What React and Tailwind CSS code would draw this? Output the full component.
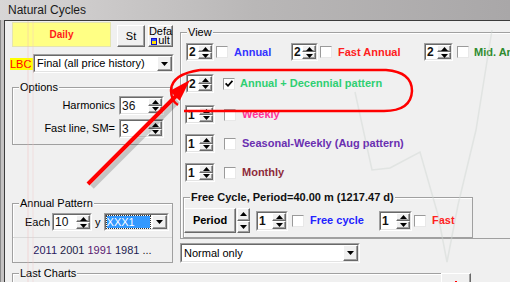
import React from "react";

const F = "font-['Liberation_Sans',Arial,sans-serif]";

function Tri({ down }) {
  return (
    <svg width="7" height="4" viewBox="0 0 7 4">
      <path d={down ? "M0 0H7L3.5 4Z" : "M3.5 0L7 4H0Z"} fill="#000" />
    </svg>
  );
}

const raised =
  "bg-[#f0f0f0] border border-t-white border-l-white border-b-[#696969] border-r-[#696969] shadow-[inset_-1px_-1px_0_#a0a0a0]";

function SpinBtns({ className = "" }) {
  return (
    <div className={`flex flex-col shrink-0 ${className}`}>
      <div className={`flex-1 flex items-center justify-center ${raised}`}>
        <Tri />
      </div>
      <div className={`flex-1 flex items-center justify-center ${raised}`}>
        <Tri down />
      </div>
    </div>
  );
}

function Spin({ v, className = "" }) {
  return (
    <div
      className={`flex shrink-0 border border-t-[#a0a0a0] border-l-[#a0a0a0] border-b-white border-r-white ${className}`}
    >
      <div className="flex flex-1 border border-t-[#696969] border-l-[#696969] border-b-[#e3e3e3] border-r-[#e3e3e3] bg-white">
        <span className="flex-1 pl-[1px] text-[12px] leading-none flex items-center text-[#111]">
          {v}
        </span>
        <SpinBtns className="w-[14px]" />
      </div>
    </div>
  );
}

function Check({ checked, className = "" }) {
  return (
    <div
      className={`w-[12px] h-[12px] shrink-0 border border-t-[#9a9a9a] border-l-[#9a9a9a] border-b-[#e8e8e8] border-r-[#e8e8e8] bg-white flex items-center justify-center ${className}`}
    >
      {checked && (
        <svg width="8" height="7" viewBox="0 0 8 7">
          <path d="M0.6 3.4L3 5.8L7.4 0.8" stroke="#000" strokeWidth="1.7" fill="none" />
        </svg>
      )}
    </div>
  );
}

function Combo({ className = "", children }) {
  return (
    <div
      className={`flex shrink-0 border border-t-[#a0a0a0] border-l-[#a0a0a0] border-b-white border-r-white ${className}`}
    >
      <div className="flex flex-1 border border-t-[#696969] border-l-[#696969] border-b-[#e3e3e3] border-r-[#e3e3e3] bg-white">
        <div className="flex-1 flex items-center overflow-hidden">{children}</div>
        <div className={`w-[15px] flex items-center justify-center ${raised}`}>
          <Tri down />
        </div>
      </div>
    </div>
  );
}

function Group({ label, className = "", labelCls = "", children }) {
  return (
    <div className={`relative shrink-0 border border-[#a0a0a0] shadow-[inset_1px_1px_0_#fff] ${className}`}>
      <span
        className={`absolute -top-[7px] left-[6px] bg-[#f0f0f0] px-[1px] text-[11px] leading-[13px] whitespace-nowrap ${labelCls}`}
      >
        {label}
      </span>
      {children}
    </div>
  );
}

export default function App() {
  return (
    <div className={`relative w-[510px] h-[282px] overflow-hidden bg-[#f0f0f0] text-[11px] text-black ${F}`}>
      {/* title bar */}
      <div className="h-[20px] bg-gradient-to-r from-[#d8d6d6] via-[#b9b7b7] to-[#a9a7a8] flex items-center pl-[8px] pb-[1px] text-[12px] text-[#1a1a1a]">
        Natural Cycles
      </div>
      <div className="flex h-[262px]">
        <div className="w-[4px] shrink-0 bg-[#c4c2c2] border-l border-[#8a8a8a]" />
        <div className="flex-1 border-t border-l border-[#3c3c3c] flex flex-col">
          {/* top section */}
          <div className="flex h-[252px] shrink-0">
            {/* left column */}
            <div className="w-[171px] shrink-0 pl-[7px] flex flex-col">
              <div className="flex mt-[1px]">
                <div className="w-[99px] h-[25px] bg-[#ffff84] border border-[#e4e4b0] flex items-center justify-center text-[10px] font-bold text-[#ff1a1a]">
                  Daily
                </div>
                <div className={`ml-[6px] mt-[3px] w-[28px] h-[22px] flex items-center justify-center text-[11px] ${raised}`}>
                  St
                </div>
                <div className={`ml-[3px] mt-[3px] w-[25px] h-[22px] flex flex-col items-center justify-center text-[11px] leading-[9px] ${raised}`}>
                  <span>Defa</span>
                  <span className="flex items-end">
                    <span className="w-[6px] h-[7px] border border-[#1010c0] bg-[#ffe000] mr-[1px] shadow-[inset_0_2px_0_#3050ff]" />
                    ult
                  </span>
                </div>
              </div>
              <div className="flex items-center mt-[7px] -ml-[2px]">
                <span className="bg-[#ffff00] text-[#ff0000] text-[11px] leading-[12px] w-[23px] h-[12px]">LBC</span>
                <Combo className="w-[141px] h-[19px]">
                  <span className="pl-[2px] text-[11px] whitespace-nowrap">Final (all price history)</span>
                </Combo>
              </div>
              <Group label="Options" className="mt-[14px] w-[161px] h-[58px]">
                <div className="flex flex-col items-end pr-[8px]">
                  <div className="flex items-center mt-[8px]">
                    <span className="mr-[4px]">Harmonics</span>
                    <Spin v="36" className="w-[45px] h-[19px]" />
                  </div>
                  <div className="flex items-center mt-[4px]">
                    <span className="mr-[4px]">Fast line, SM=</span>
                    <Spin v="3" className="w-[45px] h-[19px]" />
                  </div>
                </div>
              </Group>
              <Group label="Annual Pattern" className="mt-[58px] w-[161px] h-[60px] flex flex-col">
                <div className="flex items-center mt-[9px] pl-[12px]">
                  <span>Each</span>
                  <Spin v="10" className="ml-[2px] w-[40px] h-[18px]" />
                  <span className="ml-[3px]">y</span>
                  <Combo className="ml-[3px] w-[65px] h-[18px]">
                    <span className="ml-[1px] h-[12px] w-[43px] bg-[#3399ff] text-white text-[11px] leading-[12px] outline-1 outline-dotted outline-[#333]">
                      XXX1
                    </span>
                  </Combo>
                </div>
                <div className="mt-[6px] flex-1 border-t border-[#dadada] flex items-center justify-center text-[11px] whitespace-nowrap">
                  <span className="text-[#2a1860]">2011</span>
                  <span className="ml-[3px] text-[#1c1c44]">2001</span>
                  <span className="ml-[3px] text-[#5a1a70]">1991</span>
                  <span className="ml-[3px] text-[#1c1c50]">1981</span>
                  <span className="ml-[3px] text-[#222]">...</span>
                </div>
              </Group>
            </div>
            {/* right column */}
            <div className="flex-1 flex flex-col">
              <Group label="View" className="ml-[4px] mt-[11px] w-[340px] h-[207px] flex flex-col">
                <div className="flex items-center mt-[10px] ml-[5px] h-[18px] whitespace-nowrap font-bold">
                  <div className="w-[105px] shrink-0 flex items-center">
                    <Spin v="2" className="w-[28px] h-[18px]" />
                    <Check className="ml-[2px]" />
                    <span className="ml-[6px] text-[#3333ff]">Annual</span>
                  </div>
                  <div className="w-[133px] shrink-0 flex items-center">
                    <Spin v="2" className="w-[27px] h-[18px]" />
                    <Check className="ml-[2px]" />
                    <span className="ml-[6px] text-[#ff2020]">Fast Annual</span>
                  </div>
                  <div className="flex shrink-0 items-center">
                    <Spin v="2" className="w-[29px] h-[18px]" />
                    <Check className="ml-[4px]" />
                    <span className="ml-[5px] text-[#2e8b2e]">Mid. Annual</span>
                  </div>
                </div>
                <div className="flex items-center mt-[13px] ml-[5px] h-[19px] font-bold whitespace-nowrap">
                  <Spin v="2" className="w-[28px] h-[19px]" />
                  <Check checked className="ml-[9px]" />
                  <span className="ml-[5px] text-[#2fcf72]">Annual + Decennial pattern</span>
                </div>
                <div className="flex items-center mt-[12px] ml-[4px] h-[19px] font-bold whitespace-nowrap">
                  <Spin v="1" className="w-[30px] h-[19px]" />
                  <Check className="ml-[9px]" />
                  <span className="ml-[6px] text-[#ff3399]">Weekly</span>
                </div>
                <div className="flex items-center mt-[10px] ml-[4px] h-[19px] font-bold whitespace-nowrap">
                  <Spin v="1" className="w-[30px] h-[19px]" />
                  <Check className="ml-[9px]" />
                  <span className="ml-[6px] text-[#6a2fb0]">Seasonal-Weekly (Aug pattern)</span>
                </div>
                <div className="flex items-center mt-[10px] ml-[4px] h-[19px] font-bold whitespace-nowrap">
                  <Spin v="1" className="w-[30px] h-[19px]" />
                  <Check className="ml-[9px]" />
                  <span className="ml-[6px] text-[#8e2b3a]">Monthly</span>
                </div>
                <Group
                  label="Free Cycle, Period=40.00 m (1217.47 d)"
                  labelCls="font-bold text-[#111]"
                  className="ml-[2px] mt-[15px] w-[290px] h-[41px]"
                >
                  <div className="flex items-center mt-[10px] whitespace-nowrap font-bold">
                    <div className="w-[195px] shrink-0 flex items-center">
                      <div className={`w-[52px] h-[25px] shrink-0 flex items-center justify-center ${raised}`}>Period</div>
                      <SpinBtns className="w-[13px] h-[25px] ml-[1px]" />
                      <Spin v="1" className="ml-[6px] w-[32px] h-[20px]" />
                      <Check className="ml-[4px]" />
                      <span className="ml-[6px] text-[#2222ff]">Free cycle</span>
                    </div>
                    <Spin v="1" className="w-[33px] h-[20px]" />
                    <Check className="ml-[2px]" />
                    <span className="ml-[6px] text-[#ff2020]">Fast</span>
                  </div>
                </Group>
              </Group>
              <Combo className="ml-[4px] mt-[4px] w-[180px] h-[20px]">
                <span className="pl-[2px] text-[11px] whitespace-nowrap">Normal only</span>
              </Combo>
            </div>
          </div>
          {/* last charts */}
          <Group label="Last Charts" className="ml-[7px] w-[459px] h-[20px]">
            <div className={`absolute -right-[1px] -top-[1px] w-[30px] h-[14px] flex items-end justify-center ${raised}`}>
              <span className="w-[2px] h-[3px] bg-[#ff0000] mb-[2px]" />
            </div>
          </Group>
        </div>
      </div>

      {/* annotation overlay */}
      <svg className="absolute left-0 top-0 pointer-events-none" width="510" height="282" viewBox="0 0 510 282">
        <g opacity="0.45" fill="none">
          <path d="M28 21V282" stroke="#f2b8b8" strokeWidth="1" />
          <path d="M33 21V282" stroke="#f4caca" strokeWidth="1" />
          <path d="M355 92 L372 170 L390 168 L420 152 L438 215 L447 262 L458 205 L476 130 L492 30" stroke="#cfd6d2" strokeWidth="1.5" />
        </g>
        <path d="M92 187 L178 101" stroke="#000" strokeOpacity="0.18" strokeWidth="5" />
        <path
          d="M200 70 L386 70 Q412 72 412 91 Q411 111 384 111 L184 111"
          stroke="#ff0000"
          strokeWidth="2.5"
          fill="none"
        />
        <path d="M200 70 Q172 74 171 90 Q171 101 178 105" stroke="#ff0000" strokeWidth="2.5" fill="none" />
        <path d="M88 184 L176 96" stroke="#ff0000" strokeWidth="4" />
        <polygon points="190,80 179.7,100.7 169.7,90.9" fill="#ff0000" />
      </svg>
    </div>
  );
}
